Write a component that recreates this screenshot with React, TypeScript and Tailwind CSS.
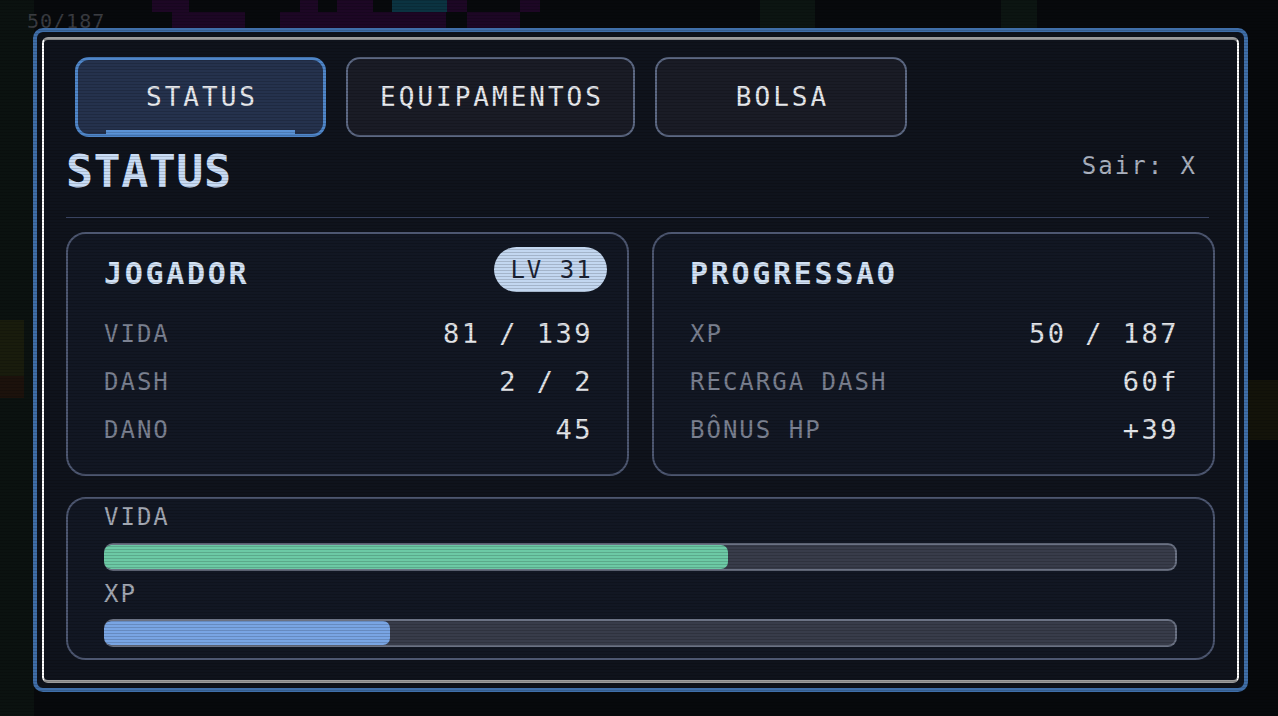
import React from "react";

const jogador = [
  { label: "VIDA", value: "81 / 139" },
  { label: "DASH", value: "2 / 2" },
  { label: "DANO", value: "45" },
];

const progressao = [
  { label: "XP", value: "50 / 187" },
  { label: "RECARGA DASH", value: "60f" },
  { label: "BÔNUS HP", value: "+39" },
];

function StatRow({ label, value }: { label: string; value: string }) {
  return (
    <div className="flex h-[48px] items-center justify-between">
      <span className="text-[24px] leading-[28px] tracking-[2px] text-[#7b8191]">{label}</span>
      <span className="text-[27px] leading-[32px] tracking-[2.5px] text-[#e3e5e9]">{value}</span>
    </div>
  );
}

function Bar({ pct, fill }: { pct: number; fill: string }) {
  return (
    <div className="flex h-[28px] rounded-[9px] bg-[#6b7284] py-[2px] pr-[2px]">
      <div className="flex-1 overflow-hidden rounded-[7px] bg-[#383c4a]">
        <div className={`h-full rounded-[7px] ${fill}`} style={{ width: `${pct}%` }} />
      </div>
    </div>
  );
}

export default function App() {
  return (
    <div className="relative h-[716px] w-[1278px] overflow-hidden bg-[#07090c] font-['DejaVu_Sans_Mono',monospace]">
      {/* game scene behind the menu */}
      <div className="absolute inset-y-0 left-0 flex w-[34px] flex-col bg-[#0b1210] pt-[320px]">
        <div className="h-[56px] w-[24px] bg-[#191c0d]" />
        <div className="h-[22px] w-[24px] bg-[#1c120c]" />
      </div>
      <div className="absolute inset-y-0 right-0 w-[30px] pt-[380px]">
        <div className="h-[60px] bg-[#13130a]" />
      </div>
      <div className="absolute left-[152px] top-0 flex flex-col">
        <div className="flex h-[12px]">
          <div className="w-[37px] bg-[#1d0725]" />
          <div className="ml-[111px] w-[18px] bg-[#1d0725]" />
          <div className="ml-[19px] w-[36px] bg-[#1d0725]" />
          <div className="ml-[19px] w-[55px] bg-[#0b3341]" />
          <div className="w-[20px] bg-[#1d0725]" />
          <div className="ml-[53px] w-[20px] bg-[#1d0725]" />
        </div>
        <div className="flex h-[16px]">
          <div className="ml-[20px] w-[73px] bg-[#1d0725]" />
          <div className="ml-[35px] w-[166px] bg-[#1d0725]" />
          <div className="ml-[21px] w-[53px] bg-[#1d0725]" />
        </div>
      </div>
      <div className="absolute left-[760px] top-0 flex h-[28px] gap-[186px]">
        <div className="w-[55px] bg-[#0c1512]" />
        <div className="w-[36px] bg-[#0c1512]" />
      </div>
      <div className="absolute left-[27px] top-[9px] text-[20px] leading-[24px] tracking-[1px] text-[#3a3c41]">50/187</div>

      {/* menu panel */}
      <div className="relative pl-[33px] pt-[28px]">
        <div className="h-[664px] w-[1215px] rounded-[10px] border-4 border-[#3f6ea8] bg-[#0e121a] p-[5px]">
          <div className="h-full rounded-[6px] border-x-2 border-y-[3px] border-x-white border-y-[#9c9c9c] bg-[#0f131c] px-[22px] pt-[17px]">
            {/* Tabs */}
            <div className="ml-[9px] flex gap-5">
              <div className="relative flex h-[80px] w-[251px] items-center justify-center rounded-[14px] border-[3px] border-[#4f86c9] bg-[#25324d] pl-[3px] text-[26px] tracking-[3px] text-[#e8eaee]">
                STATUS
                <div className="absolute bottom-0 left-[28px] right-[28px] h-[4px] bg-[#5b93d6]" />
              </div>
              <div className="flex h-[80px] w-[289px] items-center justify-center rounded-[14px] border-2 border-[#5d6984] bg-[#1a1c26] pl-[3px] text-[26px] tracking-[3px] text-[#e8eaee]">
                EQUIPAMENTOS
              </div>
              <div className="flex h-[80px] w-[252px] items-center justify-center rounded-[14px] border-2 border-[#5d6984] bg-[#1a1c26] pl-[3px] text-[26px] tracking-[3px] text-[#e8eaee]">
                BOLSA
              </div>
            </div>

            {/* Header */}
            <div className="mt-[9px] flex items-start justify-between">
              <h1 className="text-[45px] font-bold leading-[52px] tracking-[0.5px] text-[#c9dcf5]">STATUS</h1>
              <span className="mr-[18px] mt-[6px] text-[24px] leading-[28px] tracking-[2px] text-[#aab1bf]">Sair: X</span>
            </div>
            <div className="mr-[6px] mt-[19px] h-px bg-[#394360]" />

            {/* Cards */}
            <div className="mt-[14px] grid grid-cols-2 gap-[23px]">
              <div className="rounded-[20px] border-2 border-[#4d5771] bg-[#121723] pb-[20px] pl-[36px] pr-[20px] pt-[13px]">
                <div className="flex h-[45px] items-start justify-between">
                  <span className="pt-[9px] text-[30px] font-bold leading-[36px] tracking-[2.7px] text-[#d3e2f5]">JOGADOR</span>
                  <span className="flex h-[45px] w-[113px] items-center justify-center rounded-full bg-[#c3d7f0] pl-[2px] text-[24px] leading-[28px] tracking-[2px] text-[#1b2233]">
                    LV 31
                  </span>
                </div>
                <div className="mt-[18px] pr-[14px]">
                  {jogador.map((r) => (
                    <StatRow key={r.label} label={r.label} value={r.value} />
                  ))}
                </div>
              </div>

              <div className="rounded-[20px] border-2 border-[#4d5771] bg-[#121723] pb-[20px] pl-[36px] pr-[34px] pt-[13px]">
                <div className="flex h-[45px] items-start">
                  <span className="pt-[9px] text-[30px] font-bold leading-[36px] tracking-[2.7px] text-[#d3e2f5]">PROGRESSAO</span>
                </div>
                <div className="mt-[18px]">
                  {progressao.map((r) => (
                    <StatRow key={r.label} label={r.label} value={r.value} />
                  ))}
                </div>
              </div>
            </div>

            {/* Bars */}
            <div className="mt-[21px] rounded-[20px] border-2 border-[#4d5771] bg-[#121723] px-[36px] pb-[11px] pt-[4px]">
              <div className="text-[24px] leading-[28px] tracking-[2px] text-[#a3a8b3]">VIDA</div>
              <div className="mt-3">
                <Bar pct={(81 / 139) * 100} fill="bg-[#6cc9a5]" />
              </div>
              <div className="mt-[9px] text-[24px] leading-[28px] tracking-[2px] text-[#a3a8b3]">XP</div>
              <div className="mt-[11px]">
                <Bar pct={(50 / 187) * 100} fill="bg-[#79a5e4]" />
              </div>
            </div>
          </div>
        </div>
      </div>

      {/* scanlines */}
      <div className="pointer-events-none absolute inset-0 bg-[repeating-linear-gradient(to_bottom,rgba(0,0,0,0.16)_0px,rgba(0,0,0,0.16)_1px,transparent_1px,transparent_3px)]" />
    </div>
  );
}
